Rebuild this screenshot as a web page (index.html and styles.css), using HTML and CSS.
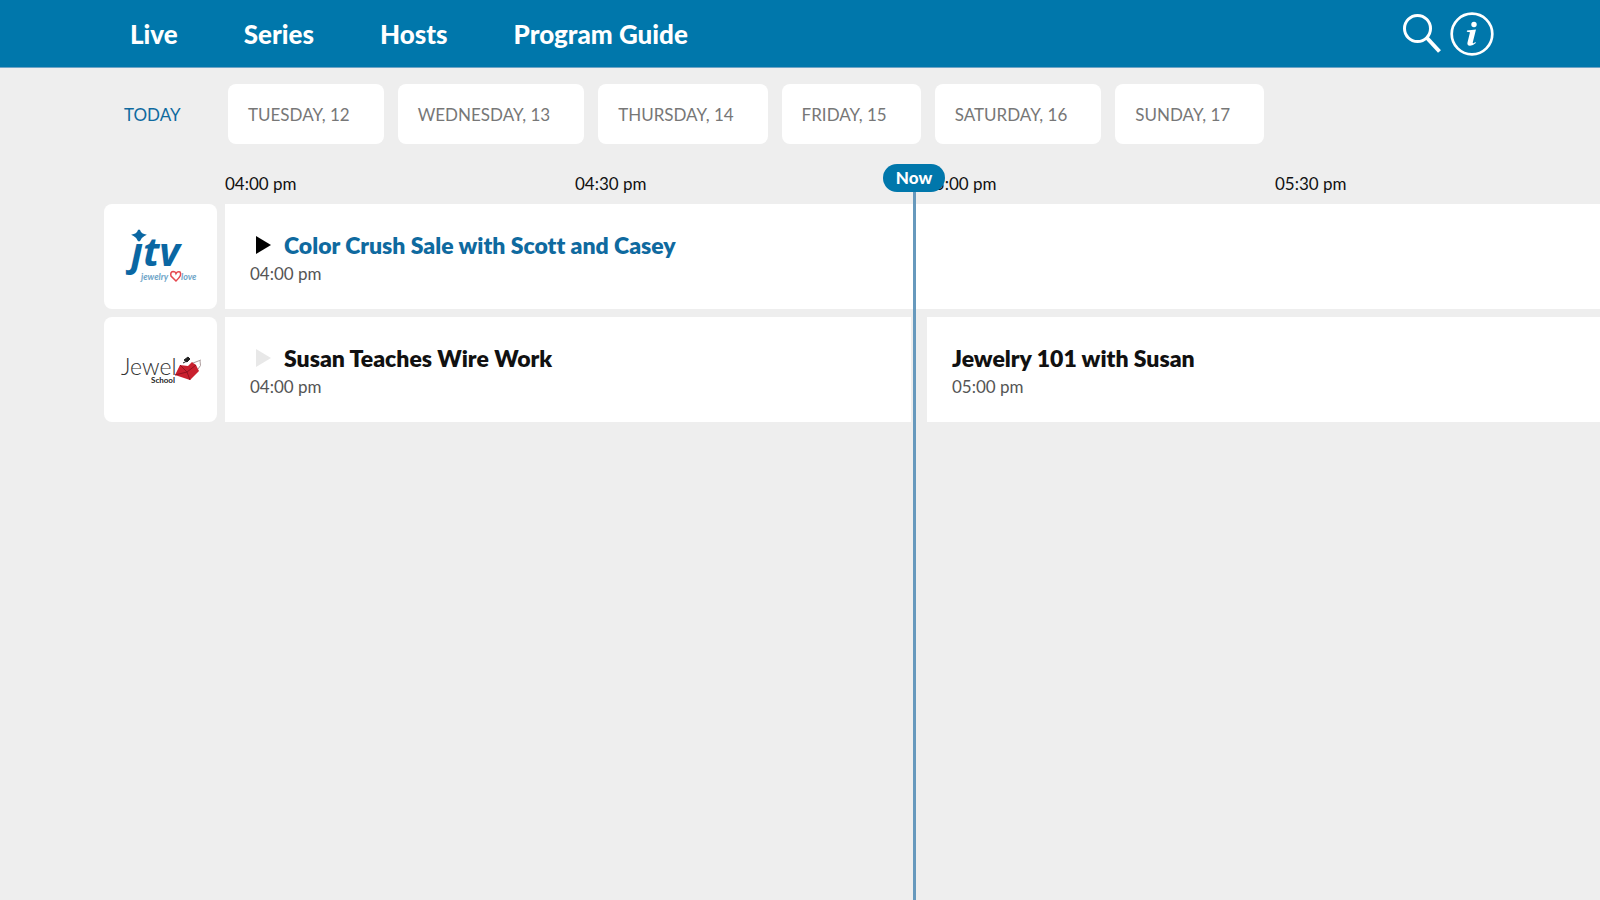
FILE: index.html
```html
<!DOCTYPE html>
<html lang="en">
<head>
<meta charset="utf-8">
<meta name="viewport" content="width=device-width, initial-scale=1">
<title>Program Guide</title>
<link rel="stylesheet" href="styles.css">
</head>
<body>
<header class="topbar">
  <nav class="nav">
    <a href="#live">Live</a>
    <a href="#series">Series</a>
    <a href="#hosts">Hosts</a>
    <a href="#guide">Program Guide</a>
  </nav>
  <div class="actions">
    <button type="button" class="icon-button" aria-label="Search">
      <svg class="icon-search" viewBox="0 0 38 40" fill="none" stroke="currentColor"><circle cx="14.5" cy="14.5" r="13" stroke-width="3"/><path d="M24 24 36.5 37.5" stroke-width="4"/></svg>
    </button>
    <button type="button" class="icon-button" aria-label="Information">
      <svg class="icon-info" viewBox="0 0 44 44"><circle cx="22" cy="22" r="20.3" fill="none" stroke="currentColor" stroke-width="2.7"/><circle cx="24" cy="12.5" r="2.7" fill="currentColor"/><path d="M17 18.5 26 17.5 22.8 30.2Q22.500 31.800 23.600 31.200L25.500 30 25.800 31Q22.500 34 19.800 33.800 16.800 33.500 17.500 30.500L20 20.300 16.800 19.700Z" fill="currentColor"/></svg>
    </button>
  </div>
</header>
<main class="guide">
  <div class="days">
    <button type="button" class="today">TODAY</button>
    <button type="button" class="day">TUESDAY, 12</button>
    <button type="button" class="day">WEDNESDAY, 13</button>
    <button type="button" class="day">THURSDAY, 14</button>
    <button type="button" class="day">FRIDAY, 15</button>
    <button type="button" class="day">SATURDAY, 16</button>
    <button type="button" class="day">SUNDAY, 17</button>
  </div>
  <section class="schedule">
    <div class="times">
      <time>04:00 pm</time>
      <time>04:30 pm</time>
      <time>05:00 pm</time>
      <time>05:30 pm</time>
    </div>
    <div class="row">
      <div class="channel">
        <svg class="logo" viewBox="0 0 113 105" role="img" aria-label="jtv jewelry love">
          <g fill="#0a67a3">
            <text class="jtv" x="27" y="62">ȷtv</text>
            <path d="M35 26Q36 30 40 31 36 33 35 37 34 33 30 31 34 30 35 26Z" stroke="#0a67a3" stroke-width="2"/>
          </g>
          <text class="tagline" x="37" y="76">jewelry</text>
          <path d="M72 77 67 72Q66 68 69 67.500 71.500 67.500 72 69.500 73.500 67 76 68 78.500 71 72 77Z" fill="none" stroke="#e5484f" stroke-width="1.500"/>
          <text class="tagline" x="77" y="76">love</text>
        </svg>
      </div>
      <article class="program grow">
        <h2 class="title live"><svg class="play" viewBox="0 0 15 18"><path d="M0 0 15 9 0 18Z"/></svg><a href="#color-crush">Color Crush Sale with Scott and Casey</a></h2>
        <time class="start">04:00 pm</time>
      </article>
    </div>
    <div class="row">
      <div class="channel">
        <svg class="logo" viewBox="0 0 113 105" role="img" aria-label="Jewel School">
          <text class="jewel" x="17" y="58">Jewel</text>
          <text class="school" x="47" y="66">School</text>
          <path d="M71 58 76 48 84 49 88 45 92 48 95 54 86 63Z" fill="#c9202e"/>
          <path d="M76 48 83 55 71 58M83 55 92 48M83 55 86 63" fill="none" stroke="#94121f"/>
          <path d="M79 46 85 43M80 43 84 40 86 42 83 45Z" fill="#222" stroke="#222"/>
          <path d="M89 46 97 43M94 52Q98 49 96 44" fill="none" stroke="#a99"/>
        </svg>
      </div>
      <article class="program hour">
        <h2 class="title"><svg class="play idle" viewBox="0 0 15 18"><path d="M0 0 15 9 0 18Z"/></svg><a href="#wire-work">Susan Teaches Wire Work</a></h2>
        <time class="start">04:00 pm</time>
      </article>
      <article class="program grow">
        <h2 class="title"><a href="#jewelry-101">Jewelry 101 with Susan</a></h2>
        <time class="start">05:00 pm</time>
      </article>
    </div>
    <div class="now"><span class="now-label">Now</span></div>
  </section>
</main>
</body>
</html>
```

FILE: styles.css
```css
* { box-sizing: border-box; }

body {
  margin: 0;
  min-height: 100vh;
  display: flex;
  flex-direction: column;
  overflow-x: hidden;
  background: #eee;
  color: #111;
  font-family: Lato, "Liberation Sans", sans-serif;
}

a { color: inherit; text-decoration: none; }

button {
  margin: 0;
  border: 0;
  background: none;
  font: inherit;
  cursor: pointer;
}

.topbar {
  display: flex;
  justify-content: space-between;
  align-items: center;
  height: 68px;
  padding: 0 106px 0 130px;
  background: #0077ab;
  border-bottom: 1px solid #6fa4c6;
  color: #fff;
}

.nav {
  display: flex;
  gap: 66px;
  font-size: 26px;
  font-weight: 900;
  line-height: 32px;
}

.actions { display: flex; align-items: center; gap: 9px; }
.icon-button { display: flex; padding: 0; color: #fff; }
.icon-search { width: 38px; height: 40px; }
.icon-info { width: 44px; height: 44px; }

.guide {
  flex: 1;
  display: flex;
  flex-direction: column;
  padding: 16px 0 0 104px;
}

.days { display: flex; gap: 14px; }
.days button { height: 60px; font-size: 17px; }
.today { width: 110px; padding: 0 20px; text-align: left; color: #0f6a9f; }
.day {
  padding: 0 34px 0 20px;
  border-radius: 8px;
  background: #fff;
  color: #777;
}

.schedule {
  flex: 1;
  position: relative;
  display: flex;
  flex-direction: column;
  gap: 8px;
  padding-top: 28px;
}

.times { display: flex; padding-left: 121px; overflow: hidden; }
.times time { flex: 0 0 350px; font-size: 17px; line-height: 24px; }

.row { display: flex; gap: 8px; }

.channel {
  flex: 0 0 113px;
  border-radius: 8px;
  background: #fff;
}
.logo { display: block; width: 113px; height: 105px; }

.program {
  height: 105px;
  padding: 25px 25px 0;
  background: #fff;
}
.program + .program { margin-left: 8px; }
.grow { flex: 1; }
.hour { flex: 0 0 686px; }

.title {
  display: flex;
  align-items: center;
  margin: 0;
  font-size: 23px;
  font-weight: 800;
  font-variant-ligatures: none;
  line-height: 32px;
}
.live a { color: #0f6a9f; }
.play { width: 15px; height: 18px; margin: 0 13px 0 6px; fill: #000; }
.idle { fill: #e8e8e8; }
.start { display: block; font-size: 17px; line-height: 26px; color: #555; }

.now {
  position: absolute;
  top: 20px;
  bottom: 0;
  left: 779px;
  width: 62px;
  display: flex;
  flex-direction: column;
  align-items: center;
}
.now::after { content: ""; flex: 1; width: 3px; background: #6799bd; }
.now-label {
  width: 62px;
  border-radius: 14px;
  background: #0077ab;
  color: #fff;
  font-size: 17px;
  font-weight: 900;
  line-height: 28px;
  text-align: center;
}

.jtv { font: italic 700 40px "Open Sans", "Noto Sans", sans-serif; }
.tagline { font: italic 700 9px Lato, sans-serif; fill: #6ea5c8; }
.jewel { font: 300 23px Lato, sans-serif; fill: #333; }
.school { font: 700 8px Lato, sans-serif; fill: #222; }
```
